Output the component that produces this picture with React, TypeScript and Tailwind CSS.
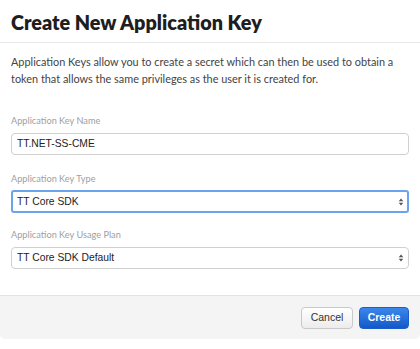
function Arrows() {
  return (
    <svg width="6" height="10" viewBox="0 0 6 10" className="shrink-0">
      <path d="M3 1.5 L5.3 4.3 H0.7 Z" fill="#555" />
      <path d="M3 8.5 L5.3 5.7 H0.7 Z" fill="#555" />
    </svg>
  );
}

function Field({
  label,
  value,
  select,
  focused,
  className,
}: {
  label: string;
  value: string;
  select?: boolean;
  focused?: boolean;
  className?: string;
}) {
  return (
    <div className={"flex flex-col " + (className ?? "")}>
      <label className="text-[9.2px] leading-[12px] text-[#a0a0a0] font-['Lato',sans-serif]">
        {label}
      </label>
      <div
        className={
          focused
            ? "mt-[5px] flex h-[23px] items-center justify-between rounded-[3px] border-2 border-[#6aa3ee] pl-[4px] pr-[3px] text-[10.3px] text-[#222] font-['Liberation_Sans',Arial,sans-serif]"
            : "mt-[6px] flex h-[22px] items-center justify-between rounded-[4px] border border-[#d0d0d0] pl-[5px] pr-[4px] text-[10.3px] text-[#222] font-['Liberation_Sans',Arial,sans-serif]"
        }
      >
        <span>{value}</span>
        {select && <Arrows />}
      </div>
    </div>
  );
}

export default function App() {
  return (
    <div className="w-[420px] h-[349px] bg-white">
      <div className="flex h-[339px] flex-col overflow-hidden rounded-[5px] bg-white">
        <div className="h-[43px] border-b border-[#e8e8e8] px-[11px] pt-[10px]">
          <h1 className="text-[19.8px] leading-[24px] font-extrabold text-[#1e1e1e] font-['Lato',sans-serif]">
            Create New Application Key
          </h1>
        </div>
        <div className="flex-1 px-[11px] pt-[10px]">
          <p className="text-[10.9px] leading-[17px] text-[#444] font-['Lato',sans-serif] whitespace-nowrap">
            Application Keys allow you to create a secret which can then be used to obtain a
            <br />
            token that allows the same privileges as the user it is created for.
          </p>
          <div className="mt-[28px] flex flex-col">
            <Field label="Application Key Name" value="TT.NET-SS-CME" />
            <Field className="mt-[18px]" label="Application Key Type" value="TT Core SDK" select focused />
            <Field className="mt-[16px]" label="Application Key Usage Plan" value="TT Core SDK Default" select />
          </div>
        </div>
        <div className="flex h-[44px] items-center justify-end gap-[6px] border-t border-[#e3e3e3] bg-[#f4f4f4] px-[11px]">
          <button className="h-[22px] w-[52px] rounded-[4px] border border-[#c8c8c8] bg-gradient-to-b from-white to-[#ececec] text-[10.5px] text-[#333] font-['Liberation_Sans',Arial,sans-serif]">
            Cancel
          </button>
          <button className="h-[22px] w-[50px] rounded-[4px] border border-[#1a5fc9] bg-gradient-to-b from-[#3b87ec] to-[#1458c9] text-[10.5px] font-bold text-white font-['Liberation_Sans',Arial,sans-serif]">
            Create
          </button>
        </div>
      </div>
    </div>
  );
}
